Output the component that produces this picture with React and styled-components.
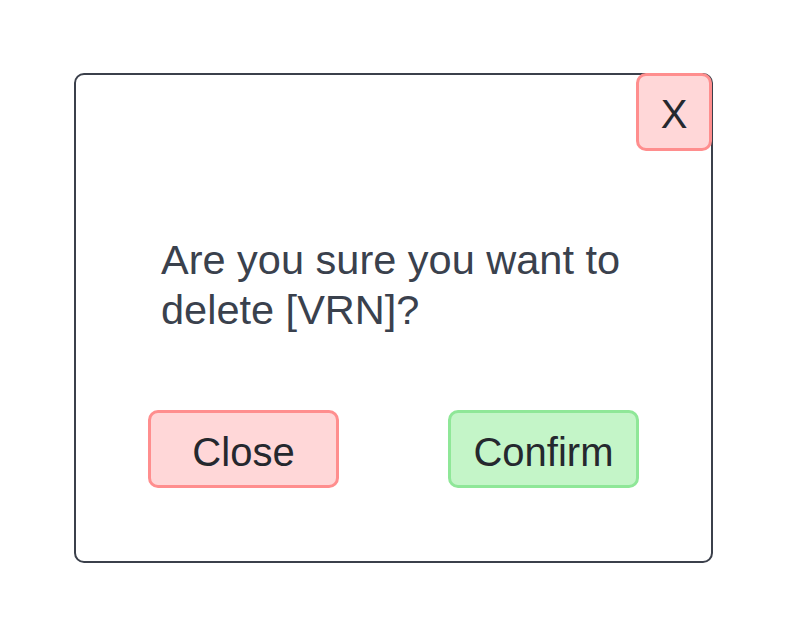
import React from "react";
import styled, { createGlobalStyle } from "styled-components";

const GlobalStyle = createGlobalStyle`
  body {
    margin: 0;
    background: #ffffff;
    font-family: "Liberation Sans", Arial, sans-serif;
  }
`;

const Page = styled.div`
  width: 788px;
  height: 638px;
  padding: 73px 0 0 74px;
  box-sizing: border-box;
`;

const Dialog = styled.div`
  position: relative;
  width: 639px;
  height: 490px;
  box-sizing: border-box;
  border: 2px solid #3b404b;
  border-radius: 10px;
  background: #ffffff;
  display: flex;
  flex-direction: column;
`;

const Message = styled.p`
  margin: 160px 0 0;
  padding: 0 85px;
  font-size: 41.5px;
  line-height: 50px;
  color: #3a414d;
`;

const ButtonRow = styled.div`
  display: flex;
  justify-content: space-between;
  padding: 0 72px;
  margin-top: 75px;
`;

const tones = {
  red: { bg: "#ffd7d8", border: "#ff8e8e" },
  green: { bg: "#c4f5c8", border: "#8fe798" },
};

const Button = styled.button`
  width: 191px;
  height: 78px;
  box-sizing: border-box;
  border: 3px solid ${(p) => tones[p.$tone].border};
  border-radius: 10px;
  background: ${(p) => tones[p.$tone].bg};
  font-family: "Liberation Sans", Arial, sans-serif;
  font-size: 40px;
  color: #25282e;
  padding: 6px 0 0;
  cursor: pointer;
`;

const CloseX = styled(Button)`
  position: absolute;
  top: -2px;
  right: -1px;
  width: 76px;
  height: 78px;
  padding-top: 4px;
`;

const App = () => {
  return (
    <>
      <GlobalStyle />
      <Page>
        <Dialog>
          <CloseX $tone="red">X</CloseX>
          <Message>Are you sure you want to delete [VRN]?</Message>
          <ButtonRow>
            <Button $tone="red">Close</Button>
            <Button $tone="green">Confirm</Button>
          </ButtonRow>
        </Dialog>
      </Page>
    </>
  );
};

export default App;
